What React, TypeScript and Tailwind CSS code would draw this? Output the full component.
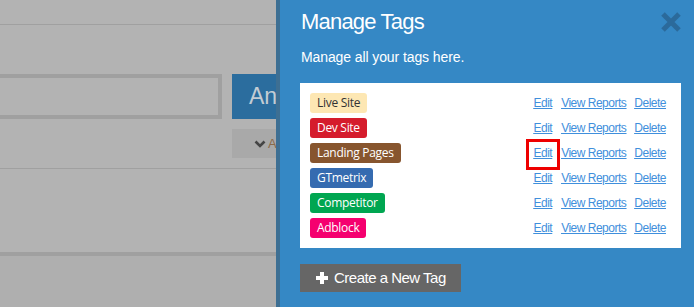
import React from 'react';

interface Tag {
    name: string;
    className: string;
}

const tags: Tag[] = [
    { name: 'Live Site', className: 'bg-[#fde7b3] text-[#333333]' },
    { name: 'Dev Site', className: 'bg-[#d51c2c] text-white' },
    { name: 'Landing Pages', className: 'bg-[#87552e] text-white' },
    { name: 'GTmetrix', className: 'bg-[#356bb0] text-white' },
    { name: 'Competitor', className: 'bg-[#00a651] text-white' },
    { name: 'Adblock', className: 'bg-[#f5006f] text-white' },
];

const PageBehind: React.FC = () => (
    <div className="w-[276px] h-full bg-[#b3b3b3] flex flex-col overflow-hidden shrink-0">
        <div className="h-[25px] border-b border-[#a0a0a0]" />
        <div className="mt-[49px] flex">
            <div className="w-[222px] h-[45px] border-[4px] border-l-0 border-[#a0a0a0]" />
            <div className="ml-[10px] w-[44px] h-[45px] bg-[#2b6d9e] flex items-center pl-[17px] overflow-hidden">
                <span className="text-[23px] text-[#c3ccd4] font-['Liberation_Sans',sans-serif] whitespace-nowrap">An</span>
            </div>
        </div>
        <div className="mt-[10px] ml-[232px] w-[44px] h-[29px] bg-[#a9a9a9] flex items-center pl-[22px] overflow-hidden">
            <svg width="12" height="8" viewBox="0 0 12 8" className="shrink-0">
                <path d="M1.5 1.5 L6 6 L10.5 1.5" stroke="#454545" strokeWidth="2.6" fill="none" />
            </svg>
            <span className="ml-[2px] text-[13px] text-[#8a6a4a] font-['Liberation_Sans',sans-serif]">A</span>
        </div>
        <div className="mt-[10px] border-b border-[#a0a0a0]" />
        <div className="h-[83px]" />
        <div className="h-[4px] bg-[#a0a0a0]" />
        <div className="flex-1 bg-[#afafaf]" />
    </div>
);

const App: React.FC = () => {
    return (
        <div className="w-[694px] h-[307px] flex overflow-hidden font-['Liberation_Sans',sans-serif]">
            <PageBehind />
            <div className="w-[4px] h-full bg-[#3d6f93] shrink-0" />
            <div className="flex-1 h-full bg-[#3588c5] pl-[20px] pr-[13px] pt-[9px] flex flex-col">
                <div className="flex justify-between items-start">
                    <h2 className="text-[22px] leading-[26px] tracking-[-0.8px] text-white ml-[1px]">Manage Tags</h2>
                    <svg width="22" height="20" viewBox="0 0 22 20" className="mt-[3px] mr-[-1px]">
                        <path d="M3 2 L19 18 M19 2 L3 18" stroke="#2b6a9b" strokeWidth="5" />
                    </svg>
                </div>
                <p className="mt-[13px] text-[14px] leading-[18px] tracking-[-0.1px] text-white ml-[1px]">
                    Manage all your tags here.
                </p>
                <div className="mt-[17px] bg-white pl-[10px] pr-[15px] py-[10px] flex flex-col gap-[5px]">
                    {tags.map((tag, i) => (
                        <div key={tag.name} className="h-[20px] flex items-center justify-between">
                            <span
                                className={`h-[20px] px-[7px] rounded-[3px] flex items-center text-[12px] tracking-[-0.3px] font-['Open_Sans',sans-serif] ${tag.className}`}
                            >
                                {tag.name}
                            </span>
                            <div className="flex gap-[8px] text-[12px] tracking-[-0.5px] text-[#3f8fdc] underline">
                                <a className="relative cursor-pointer mr-[1px]">
                                    Edit
                                    {i === 2 && (
                                        <span className="absolute left-[-7px] right-[-8px] top-[-5px] bottom-[-8px] border-[3px] border-[#ee0000]" />
                                    )}
                                </a>
                                <a className="cursor-pointer">View Reports</a>
                                <a className="cursor-pointer">Delete</a>
                            </div>
                        </div>
                    ))}
                </div>
                <button className="mt-[16px] w-[161px] h-[28px] bg-[#666666] flex items-center pl-[15px] text-white">
                    <svg width="14" height="14" viewBox="0 0 14 14" className="shrink-0">
                        <path d="M7 1 V13 M1 7 H13" stroke="#ffffff" strokeWidth="4" />
                    </svg>
                    <span className="ml-[5px] text-[15px] tracking-[-0.5px]">Create a New Tag</span>
                </button>
            </div>
        </div>
    );
};

export default App;
